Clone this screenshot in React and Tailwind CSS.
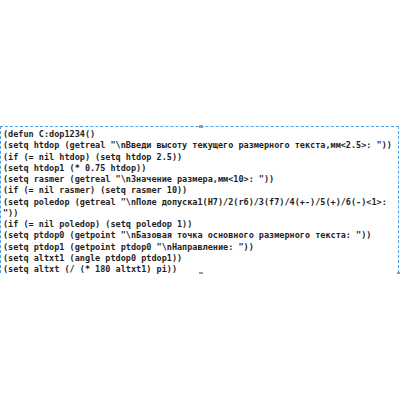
const lines = [
  '(defun C:dop1234()',
  '(setq htdop (getreal "\\nВведи высоту текущего размерного текста,мм<2.5>: "))',
  '(if (= nil htdop) (setq htdop 2.5))',
  '(setq htdop1 (* 0.75 htdop))',
  '(setq rasmer (getreal "\\nЗначение размера,мм<10>: "))',
  '(if (= nil rasmer) (setq rasmer 10))',
  '(setq poledop (getreal "\\nПоле допуска1(H7)/2(r6)/3(f7)/4(+-)/5(+)/6(-)<1>:',
  '"))',
  '(if (= nil poledop) (setq poledop 1))',
  '(setq ptdop0 (getpoint "\\nБазовая точка основного размерного текста: "))',
  '(setq ptdop1 (getpoint ptdop0 "\\nНаправление: "))',
  '(setq altxt1 (angle ptdop0 ptdop1))',
  '(setq altxt (/ (* 180 altxt1) pi))',
];

export default function App() {
  return (
    <div className="w-[400px] h-[400px] bg-white pt-[126px]">
      <div className="relative w-[399px] h-[147px] border-t border-l border-r border-dashed border-[#4ba2ec] pl-[2px] pt-[2px]">
        {/* selection handles */}
        <div className="absolute left-[198px] top-[-2px] w-[4px] h-[3px] bg-[#9a9a9a]" />
        <div className="absolute left-[198px] bottom-[-1px] w-[4px] h-[2px] bg-[#9a9a9a]" />
        <div className="absolute right-[-2px] bottom-[-1px] w-[3px] h-[2px] bg-[#9a9a9a]" />
        <div className="font-['DejaVu_Sans_Mono',monospace] font-bold text-[8.5px] leading-[11.25px] text-[#1e1e1e] whitespace-pre">
          {lines.map((l, i) => (
            <div key={i}>{l}</div>
          ))}
        </div>
      </div>
    </div>
  );
}
